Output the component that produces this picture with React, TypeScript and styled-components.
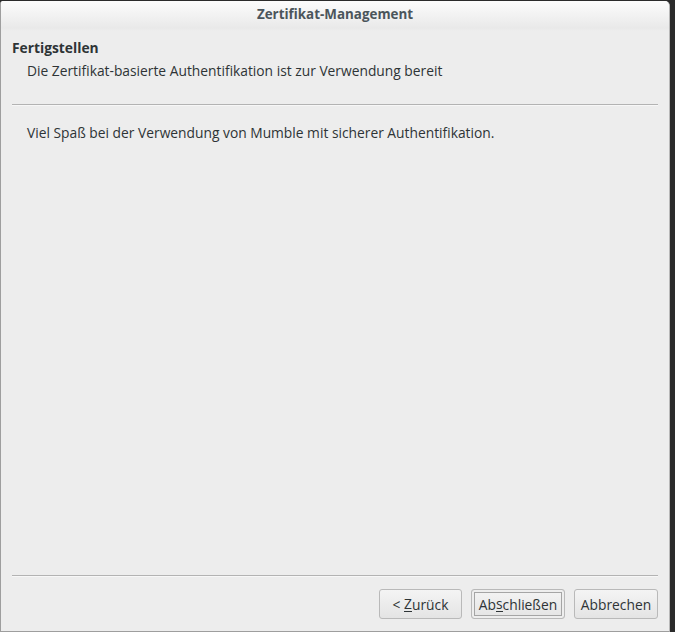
import React from "react";
import styled, { createGlobalStyle } from "styled-components";

const Global = createGlobalStyle`
  html, body { margin: 0; padding: 0; background: #2b2b2b; }
  body { font-family: "Open Sans", "DejaVu Sans", sans-serif; }
`;

const Screen = styled.div`
  width: 675px;
  height: 632px;
  background: #2b2b2b;
  display: flex;
  align-items: stretch;
  box-sizing: border-box;
  padding-top: 1px;
`;

const Window = styled.div`
  width: 670px;
  height: 631px;
  box-sizing: border-box;
  display: flex;
  flex-direction: column;
  background: #ededed;
  border-left: 1px solid #9e9e9e;
  border-bottom: 1px solid #9e9e9e;
  border-right: 1px solid #b8b8b8;
  border-top-right-radius: 5px;
  border-top-left-radius: 3px;
  overflow: hidden;
`;

const TitleBar = styled.div`
  height: 26px;
  flex: none;
  display: flex;
  align-items: center;
  justify-content: center;
  background: linear-gradient(#fcfcfc, #e9e9e9 90%, #ededed);
  color: #4b555b;
  font-size: 13.4px;
  font-weight: 700;
  padding-bottom: 4px;
`;

const Body = styled.div`
  flex: 1;
  display: flex;
  flex-direction: column;
  padding: 0 11px 0 11px;
  color: #2e3436;
  font-size: 13.8px;
`;

const Header = styled.div`
  display: flex;
  flex-direction: column;
  padding-top: 7px;
  height: 73px;
  box-sizing: border-box;
`;

const PageTitle = styled.div`
  font-weight: 700;
  line-height: 19px;
`;

const PageSubtitle = styled.div`
  padding-left: 15px;
  line-height: 19px;
  margin-top: 4px;
`;

const Rule = styled.div`
  height: 1px;
  background: #b3b3b3;
  border-bottom: 1px solid #f7f7f7;
  flex: none;
`;

const Content = styled.div`
  flex: 1;
  padding: 17px 0 0 15px;
  line-height: 19px;
`;

const Footer = styled.div`
  display: flex;
  justify-content: flex-end;
  gap: 9px;
  padding: 12px 0 12px 0;
  height: 54px;
  box-sizing: border-box;
`;

const Button = styled.button<{ $default?: boolean; $w: number }>`
  width: ${(p) => p.$w}px;
  height: 30px;
  box-sizing: border-box;
  padding: 0 ${(p) => (p.$default ? "5px" : "8px")};
  border: 1px solid #b9b9b9;
  border-radius: 3px;
  background: linear-gradient(#f4f4f4, #e4e4e4);
  font-family: inherit;
  font-size: 13.8px;
  color: #2e3436;
  display: flex;
  align-items: center;
  justify-content: center;
  box-shadow: ${(p) => (p.$default ? "inset 0 0 0 2px #eeeeee, inset 0 0 0 3px #a5a5a5" : "none")};
  u { text-decoration: none; border-bottom: 1px solid #2e3436; line-height: 14px; }
`;

export default function App() {
  return (
    <>
      <Global />
      <Screen>
        <Window>
          <TitleBar>Zertifikat-Management</TitleBar>
          <Body>
            <Header>
              <PageTitle>Fertigstellen</PageTitle>
              <PageSubtitle>Die Zertifikat-basierte Authentifikation ist zur Verwendung bereit</PageSubtitle>
            </Header>
            <Rule />
            <Content>Viel Spaß bei der Verwendung von Mumble mit sicherer Authentifikation.</Content>
            <Rule />
            <Footer>
              <Button $w={83}>
                &lt;&nbsp;<u>Z</u>urück
              </Button>
              <Button $default $w={94}>
                Ab<u>s</u>chließen
              </Button>
              <Button $w={84}>Abbrechen</Button>
            </Footer>
          </Body>
        </Window>
      </Screen>
    </>
  );
}
